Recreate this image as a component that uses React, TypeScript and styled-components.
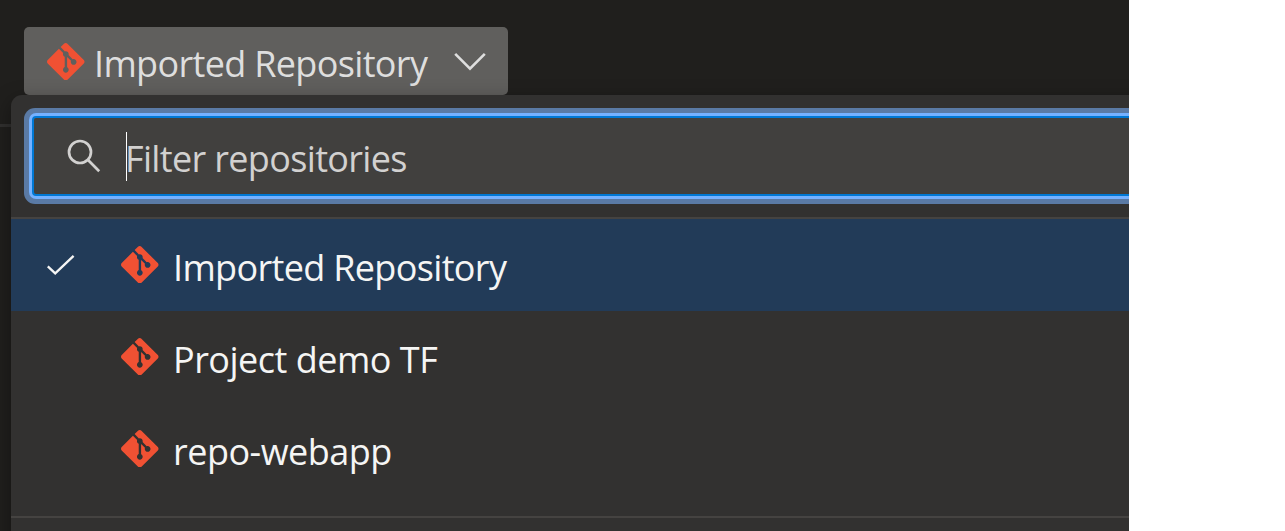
import React from 'react';
import styled, { createGlobalStyle } from 'styled-components';
import { SiGit } from 'react-icons/si';

const GlobalStyle = createGlobalStyle`
  * { box-sizing: border-box; }
  body {
    margin: 0;
    background: #ffffff;
    font-family: 'Open Sans', 'Noto Sans', sans-serif;
  }
`;

const Page = styled.main`
  position: relative;
  width: 1129px;
  height: 531px;
  overflow: hidden;
  background: #201f1d;
`;

const Header = styled.header`
  height: 127px;
  padding: 27px 24px 0;
  border-bottom: 3px solid #31302f;
`;

const PickerButton = styled.button`
  display: flex;
  align-items: center;
  width: 484px;
  height: 68px;
  padding: 1px 22px 0 23px;
  border: 0;
  border-radius: 5px;
  background: #605f5d;
  color: #dedede;
  font: inherit;
`;

const GitIcon = styled(SiGit)`
  flex: none;
  width: 37.5px;
  height: 37.5px;
  color: #f05133;
`;

const Label = styled.span<{ $tracking?: number }>`
  font-size: 36px;
  line-height: 48px;
  white-space: pre;
  letter-spacing: ${({ $tracking = 0 }) => $tracking}px;
`;

const ButtonLabel = styled(Label)`
  flex: none;
  width: 369px;
  padding: 5px 0 0 9.5px;
  text-align: left;
`;

const Chevron = styled.svg`
  flex: none;
  width: 32px;
  height: 20px;
`;

const Popup = styled.section`
  position: absolute;
  top: 95px;
  left: 11px;
  width: 1180px;
  height: 470px;
  border-radius: 11px;
  background: #323130;
  box-shadow: 0 6px 20px rgba(0, 0, 0, 0.38);
`;

const FilterArea = styled.div`
  height: 124px;
  padding: 21px 21px 0;
  border-bottom: 2px solid #454341;
`;

const FilterBox = styled.div`
  display: flex;
  align-items: center;
  height: 80px;
  padding-left: 33px;
  border: 2px solid #0078d4;
  border-radius: 4px;
  background: #41403e;
  color: #d2d1d0;
  box-shadow: 0 0 0 3px #75b1ff, 0 0 0 8px #5a7aa5;
`;

const SearchIcon = styled.svg`
  flex: none;
  width: 34px;
  height: 34px;
`;

const Caret = styled.span`
  width: 1px;
  height: 49px;
  margin-left: 25px;
  background: #ffffff;
`;

const Placeholder = styled(Label)`
  padding-top: 6px;
  margin-left: -2px;
`;

const List = styled.ul`
  height: 299px;
  margin: 0;
  padding: 0;
  list-style: none;
  border-bottom: 2px solid #454341;
`;

const Row = styled.li<{ $selected?: boolean }>`
  display: flex;
  align-items: center;
  height: 92px;
  padding: 0 0 1px 35px;
  color: #f5f5f4;
  background: ${({ $selected }) => ($selected ? '#223b58' : 'transparent')};
`;

const CheckSlot = styled.span`
  display: flex;
  flex: none;
  width: 75px;
`;

const RowLabel = styled(Label)`
  padding: 6px 0 0 14.5px;
`;

const repositories = [
  { name: 'Imported Repository', selected: true, tracking: -0.66 },
  { name: 'Project demo TF', selected: false, tracking: -0.5 },
  { name: 'repo-webapp', selected: false, tracking: -0.5 },
];

export default function App() {
  return (
    <>
      <GlobalStyle />
      <Page>
        <Header>
          <PickerButton type="button">
            <GitIcon />
            <ButtonLabel $tracking={-0.66}>Imported Repository</ButtonLabel>
            <Chevron viewBox="0 0 32 20" fill="none" stroke="#dedede" strokeWidth="2.6">
              <path d="M1.2 1.8 16 16.6 30.8 1.8" />
            </Chevron>
          </PickerButton>
        </Header>
        <Popup>
          <FilterArea>
            <FilterBox>
              <SearchIcon viewBox="0 0 34 34" fill="none" stroke="#d2d1d0" strokeWidth="2.7">
                <circle cx="13" cy="13" r="11" />
                <path d="M20.8 20.8 32.2 32.2" />
              </SearchIcon>
              <Caret />
              <Placeholder $tracking={-0.66}>Filter repositories</Placeholder>
            </FilterBox>
          </FilterArea>
          <List>
            {repositories.map((repo) => (
              <Row key={repo.name} $selected={repo.selected}>
                <CheckSlot>
                  {repo.selected && (
                    <svg width="30" height="22" viewBox="0 0 30 22" fill="none" stroke="#f5f5f4" strokeWidth="2.3">
                      <path d="M1.8 12.3 9.2 19.4 27.6 1.8" />
                    </svg>
                  )}
                </CheckSlot>
                <GitIcon />
                <RowLabel $tracking={repo.tracking}>{repo.name}</RowLabel>
              </Row>
            ))}
          </List>
        </Popup>
      </Page>
    </>
  );
}
